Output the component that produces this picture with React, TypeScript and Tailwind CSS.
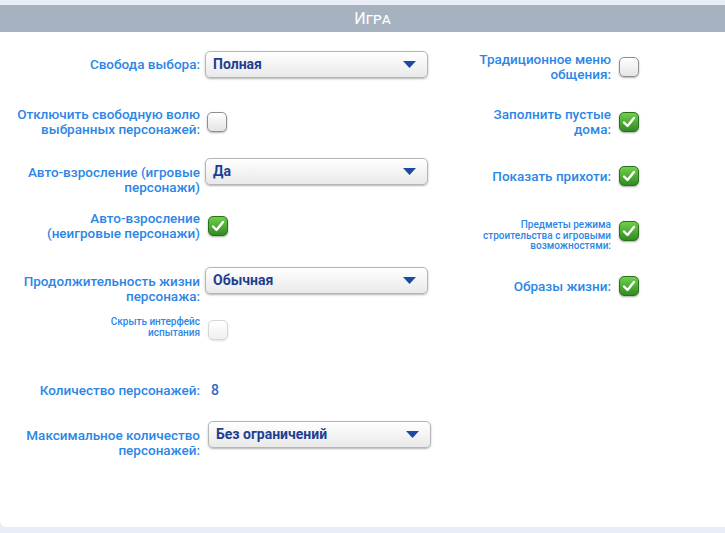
import React from 'react'

const font = { fontFamily: 'Roboto, "Liberation Sans", sans-serif' }

function Check({ on, dim }: { on?: boolean; dim?: boolean }) {
  if (on) {
    return (
      <div className="w-[20px] h-[20px] shrink-0 rounded-[5px] border border-[#2b6e1c] bg-gradient-to-b from-[#6fd04a] to-[#2f8c20] shadow-[0_1px_2px_rgba(0,0,0,0.35)] flex items-center justify-center">
        <svg width="14" height="12" viewBox="0 0 14 12">
          <path d="M2 6.5 L5.5 10 L12 2" fill="none" stroke="#fff" strokeWidth="2.4" strokeLinecap="round" strokeLinejoin="round" />
        </svg>
      </div>
    )
  }
  return (
    <div
      className={
        dim
          ? 'w-[20px] h-[20px] shrink-0 rounded-[5px] border border-[#d6d6d6] bg-gradient-to-b from-white to-[#f0f0f0] shadow-[0_1px_2px_rgba(0,0,0,0.12)]'
          : 'w-[20px] h-[20px] shrink-0 rounded-[5px] border border-[#8f8f8f] bg-gradient-to-b from-white to-[#e4e4e4] shadow-[0_1px_2px_rgba(0,0,0,0.3)]'
      }
    />
  )
}

function Select({ value }: { value: string }) {
  return (
    <div className="w-[223px] h-[27px] shrink-0 rounded-[5px] border border-[#b5b5b5] bg-gradient-to-b from-white to-[#e9e9e9] shadow-[0_1px_2px_rgba(0,0,0,0.3)] flex items-center justify-between pl-[7px] pr-[11px]">
      <span className="text-[14px] font-bold text-[#1d3f92]">{value}</span>
      <svg width="13" height="7" viewBox="0 0 13 7">
        <path d="M0 0 H13 L6.5 7 Z" fill="#1c4a9e" />
      </svg>
    </div>
  )
}

const label = 'w-[200px] shrink-0 text-right text-[13.5px] leading-[15px] font-medium text-[#2d86e6]'
const rlabel = 'w-[171px] shrink-0 text-right text-[13.5px] leading-[15px] font-medium text-[#2d86e6]'
const small = 'shrink-0 text-right text-[10px] leading-[10.5px] font-medium text-[#2d86e6]'

export default function App() {
  return (
    <div style={font} className="w-[725px] h-[533px] bg-[#e9edf5] pt-[5px] pb-[6px] flex flex-col overflow-hidden">
      <div className="h-[27px] bg-[#a7b2c1] flex items-center justify-center pl-[20px]">
        <span className="text-white text-[16px] [font-variant:small-caps]">Игра</span>
      </div>
      <div className="flex-1 bg-white rounded-bl-[6px] flex">
        {/* left column */}
        <div className="w-[440px] flex flex-col pt-[19px]">
          <div className="flex items-center gap-[5px]">
            <div className={label}>Свобода выбора:</div>
            <Select value="Полная" />
          </div>
          <div className="flex items-center gap-[7px] mt-[29px]">
            <div className={label}>
              Отключить свободную волю
              <br />
              выбранных персонажей:
            </div>
            <Check />
          </div>
          <div className="flex items-start gap-[5px] mt-[21px]">
            <div className={label + ' pt-[7px]'}>
              Авто-взросление (игровые
              <br />
              персонажи)
            </div>
            <Select value="Да" />
          </div>
          <div className="flex items-center gap-[8px] mt-[16px]">
            <div className={label}>
              Авто-взросление
              <br />
              (неигровые персонажи)
            </div>
            <Check on />
          </div>
          <div className="flex items-start gap-[5px] mt-[26px]">
            <div className={label + ' pt-[7px]'}>
              Продолжительность жизни
              <br />
              персонажа:
            </div>
            <Select value="Обычная" />
          </div>
          <div className="flex items-center gap-[8px] mt-[13px]">
            <div className={small + ' w-[200px] pb-[4px]'}>
              Скрыть интерфейс
              <br />
              испытания
            </div>
            <Check dim />
          </div>
          <div className="flex items-center gap-[11px] mt-[38px]">
            <div className={label}>Количество персонажей:</div>
            <span className="text-[14px] font-medium text-[#2d6cc0]">8</span>
          </div>
          <div className="flex items-start gap-[8px] mt-[20px]">
            <div className={label + ' pt-[7px]'}>
              Максимальное количество
              <br />
              персонажей:
            </div>
            <Select value="Без ограничений" />
          </div>
        </div>
        {/* right column */}
        <div className="flex flex-col pt-[20px]">
          <div className="h-[30px] flex items-center gap-[8px]">
            <div className={rlabel}>
              Традиционное меню
              <br />
              общения:
            </div>
            <Check />
          </div>
          <div className="h-[30px] flex items-center gap-[8px] mt-[25px]">
            <div className={rlabel}>
              Заполнить пустые
              <br />
              дома:
            </div>
            <Check on />
          </div>
          <div className="h-[30px] flex items-center gap-[8px] mt-[24px]">
            <div className={rlabel}>Показать прихоти:</div>
            <Check on />
          </div>
          <div className="h-[30px] flex items-center gap-[8px] mt-[25px]">
            <div className={small + ' w-[171px] pt-[10px]'}>
              Предметы режима
              <br />
              строительства с игровыми
              <br />
              возможностями:
            </div>
            <Check on />
          </div>
          <div className="h-[30px] flex items-center gap-[8px] mt-[25px]">
            <div className={rlabel}>Образы жизни:</div>
            <Check on />
          </div>
        </div>
      </div>
    </div>
  )
}
